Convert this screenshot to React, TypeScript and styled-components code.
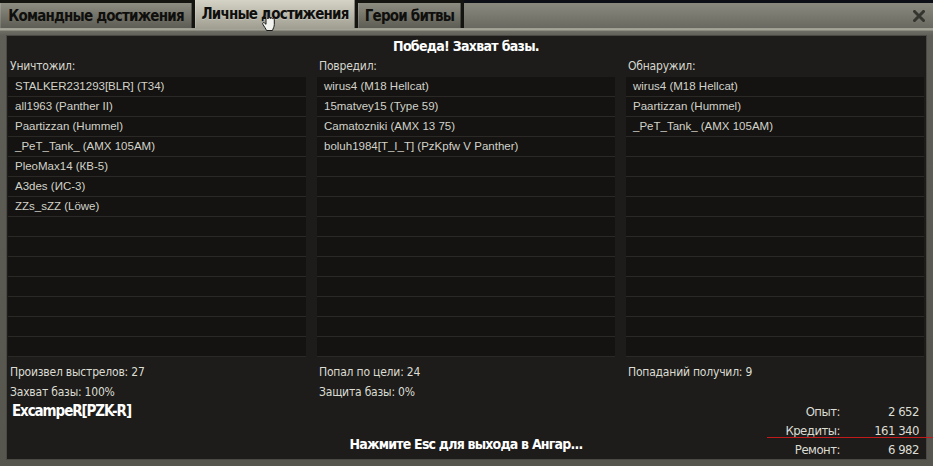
import React from 'react';
import styled, { createGlobalStyle } from 'styled-components';

const GlobalStyle = createGlobalStyle`
    html, body {
        margin: 0;
        padding: 0;
        background: #0c0f15;
    }
    * {
        box-sizing: border-box;
    }
`;

const NARROW = `"Liberation Sans Narrow", "DejaVu Sans Condensed", "Liberation Sans", sans-serif`;
const PLAIN = `"Liberation Sans", Arial, sans-serif`;

const Window = styled.div`
    position: relative;
    width: 933px;
    height: 466px;
    overflow: hidden;
    background: #0c0f15;
    font-family: ${NARROW};
    font-stretch: condensed;
`;

const Header = styled.div`
    display: flex;
    align-items: flex-end;
    height: 28px;
    background: linear-gradient(#0c0f15 0, #0c0f15 3px, #8a897e 3px, #6a6961 100%);
`;

const TabRow = styled.div`
    display: flex;
    align-items: flex-end;
    gap: 3px;
    height: 100%;
    background: #141410;
    padding-right: 3px;
`;

interface TabProps {
    active?: boolean;
    width: number;
}
const Tab = styled.div<TabProps>`
    display: flex;
    align-items: center;
    justify-content: center;
    width: ${(p) => p.width}px;
    height: ${(p) => (p.active ? '28px' : '25px')};
    font-size: 15px;
    letter-spacing: -0.8px;
    font-weight: 700;
    color: #0f0f0d;
    background: ${(p) =>
        p.active
            ? 'linear-gradient(#d4d3c6, #b5b4a7 60%, #a09f92)'
            : 'linear-gradient(#8e8d82, #75746a 50%, #5e5d55)'};
    box-shadow: inset 1px 0 0 rgba(255, 255, 255, 0.15), inset -1px 0 0 rgba(0, 0, 0, 0.35);
    text-shadow: ${(p) => (p.active ? '0 1px 0 rgba(255,255,255,0.25)' : 'none')};
    position: relative;
    z-index: ${(p) => (p.active ? 2 : 1)};
`;

const HeaderFill = styled.div`
    flex: 1;
    display: flex;
    justify-content: flex-end;
    align-items: center;
    height: 25px;
    padding-right: 8px;
`;

const CloseIcon = styled.svg`
    width: 12px;
    height: 12px;
    display: block;
`;

const Frame = styled.div`
    padding: 7px 6px 6px 6px;
    height: 438px;
    background: linear-gradient(#9d9c90 0, #a8a79a 2px, #6e6d64 3px, #5f5e57 8px, #56554e 100%);
`;

const Panel = styled.div`
    display: flex;
    flex-direction: column;
    height: 425px;
    border: 1px solid #4a4943;
    background: #1d1c1a;
    padding: 0 2px 0 1px;
    color: #dcdcd3;
`;

const Title = styled.div`
    height: 20px;
    line-height: 20px;
    text-align: center;
    font-size: 14px;
    letter-spacing: -0.7px;
    font-weight: 700;
    color: #ffffff;
`;

const Columns = styled.div`
    display: grid;
    grid-template-columns: repeat(3, 1fr);
    column-gap: 11px;
`;

const Column = styled.div`
    display: flex;
    flex-direction: column;
`;

const Label = styled.div`
    height: 20px;
    line-height: 21px;
    padding-left: 2px;
    font-size: 12px;
    letter-spacing: -0.2px;
    color: #d6d6cd;
`;

const List = styled.div`
    margin-top: 1px;
    display: flex;
    flex-direction: column;
    background: #141311;
`;

const Row = styled.div`
    height: 20px;
    line-height: 19px;
    padding-left: 7px;
    border-bottom: 1px solid #2a2926;
    font-family: ${PLAIN};
    font-stretch: normal;
    font-size: 11.5px;
    color: #d2d2ca;
    white-space: nowrap;
    overflow: hidden;
`;

const Stats = styled.div`
    margin-top: 5px;
    display: grid;
    grid-template-columns: repeat(3, 1fr);
    column-gap: 11px;
`;

const StatCell = styled.div`
    display: flex;
    flex-direction: column;
    padding-left: 2px;
`;

const StatLine = styled.div`
    height: 20px;
    line-height: 20px;
    font-size: 12px;
    letter-spacing: -0.2px;
    color: #dcdcd3;
`;

const Bottom = styled.div`
    display: grid;
    grid-template-columns: 1fr auto 1fr;
    height: 57px;
`;

const PlayerName = styled.div`
    align-self: start;
    padding-left: 4px;
    line-height: 18px;
    font-size: 15px;
    letter-spacing: -1.1px;
    font-weight: 700;
    color: #ffffff;
`;

const Hint = styled.div`
    align-self: end;
    padding-bottom: 6px;
    line-height: 18px;
    font-size: 14px;
    letter-spacing: -0.8px;
    font-weight: 700;
    color: #ffffff;
`;

const Earnings = styled.div`
    justify-self: end;
    align-self: end;
    display: grid;
    grid-template-columns: auto 79px;
    grid-auto-rows: 19px;
    padding-right: 5px;
    font-size: 13px;
    letter-spacing: -0.5px;
    line-height: 19px;
    color: #dcdcd3;
`;

const EarnLabel = styled.div`
    text-align: right;
`;

const EarnValue = styled.div`
    text-align: right;
`;

const RedMark = styled.div`
    position: absolute;
    left: 767px;
    right: 0;
    top: 437px;
    height: 1px;
    background: #c21a1a;
`;

const Cursor = styled.svg`
    position: absolute;
    left: 261px;
    top: 11px;
    width: 16px;
    height: 21px;
    z-index: 5;
`;

const destroyed = [
    'STALKER231293[BLR] (T34)',
    'all1963 (Panther II)',
    'Paartizzan (Hummel)',
    '_PeT_Tank_ (AMX 105AM)',
    'PleoMax14 (КВ-5)',
    'A3des (ИС-3)',
    'ZZs_sZZ (Löwe)',
];
const damaged = [
    'wirus4 (M18 Hellcat)',
    '15matvey15 (Type 59)',
    'Camatozniki (AMX 13 75)',
    'boluh1984[T_I_T] (PzKpfw V Panther)',
];
const spotted = ['wirus4 (M18 Hellcat)', 'Paartizzan (Hummel)', '_PeT_Tank_ (AMX 105AM)'];

const ROWS = 14;

function PlayerList(props: { title: string; items: string[] }) {
    const rows = [];
    for (let i = 0; i < ROWS; i++) {
        rows.push(<Row key={i}>{props.items[i] || ''}</Row>);
    }
    return (
        <Column>
            <Label>{props.title}</Label>
            <List>{rows}</List>
        </Column>
    );
}

export default function App() {
    return (
        <>
            <GlobalStyle />
            <Window>
                <Header>
                    <TabRow>
                        <Tab width={192}>Командные достижения</Tab>
                        <Tab width={160} active>Личные достижения</Tab>
                        <Tab width={103}>Герои битвы</Tab>
                    </TabRow>
                    <HeaderFill>
                        <CloseIcon viewBox="0 0 12 12">
                            <path d="M1.5 1.5 L10.5 10.5 M10.5 1.5 L1.5 10.5" stroke="#35352f" strokeWidth="3" strokeLinecap="square" />
                        </CloseIcon>
                    </HeaderFill>
                </Header>
                <Frame>
                    <Panel>
                        <Title>Победа! Захват базы.</Title>
                        <Columns>
                            <PlayerList title="Уничтожил:" items={destroyed} />
                            <PlayerList title="Повредил:" items={damaged} />
                            <PlayerList title="Обнаружил:" items={spotted} />
                        </Columns>
                        <Stats>
                            <StatCell>
                                <StatLine>Произвел выстрелов: 27</StatLine>
                                <StatLine>Захват базы: 100%</StatLine>
                            </StatCell>
                            <StatCell>
                                <StatLine>Попал по цели: 24</StatLine>
                                <StatLine>Защита базы: 0%</StatLine>
                            </StatCell>
                            <StatCell>
                                <StatLine>Попаданий получил: 9</StatLine>
                            </StatCell>
                        </Stats>
                        <Bottom>
                            <PlayerName>ExcampeR[PZK-R]</PlayerName>
                            <Hint>Нажмите Esc для выхода в Ангар...</Hint>
                            <Earnings>
                                <EarnLabel>Опыт:</EarnLabel>
                                <EarnValue>2 652</EarnValue>
                                <EarnLabel>Кредиты:</EarnLabel>
                                <EarnValue>161 340</EarnValue>
                                <EarnLabel>Ремонт:</EarnLabel>
                                <EarnValue>6 982</EarnValue>
                            </Earnings>
                        </Bottom>
                    </Panel>
                </Frame>
                <RedMark />
                <Cursor viewBox="0 0 16 21">
                    <path
                        d="M5 1.5 C5 0.7 6.8 0.7 6.8 1.5 L6.8 8 L7.5 6.8 C8 6.3 9.3 6.4 9.3 7.6 L9.6 7 C10.1 6.6 11.3 6.8 11.3 7.9 L11.6 7.6 C12.2 7.3 13.3 7.6 13.3 8.6 L13.3 13.5 C13.3 16 12 17.5 11.5 19.5 L5.5 19.5 C5 17.8 3.2 15.7 1.8 13.2 C1.2 12.2 2.2 11.1 3.3 11.8 L5 13.3 Z"
                        fill="#f2f2ee"
                        stroke="#1a1a18"
                        strokeWidth="1"
                    />
                </Cursor>
            </Window>
        </>
    );
}
